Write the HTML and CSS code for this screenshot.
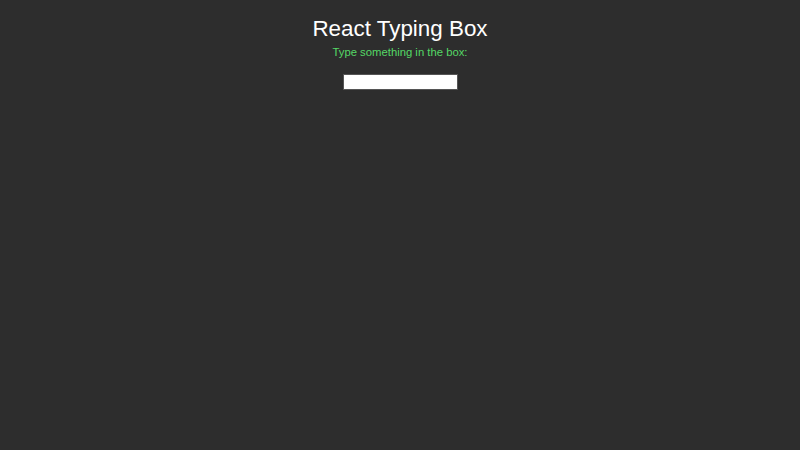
FILE: index.html
```html
<!DOCTYPE html>
<html lang="en">
<head>
  <meta charset="UTF-8">
  <meta name="viewport" content="width=device-width, initial-scale=1.0">
  <title>React Typing Box</title>
  <link rel="stylesheet" href="styles.css">
</head>
<body>

<div class="app">
  <h1 class="title">React Typing Box</h1>
  <p class="hint">Type something in the box:</p>
  <input type="text" class="typing-input" id="typing" />
  <p class="echo" id="echo"></p>
</div>

</body>
</html>
```

FILE: styles.css
```css
body {
  font-family: 'Liberation Sans', Arial, sans-serif;
  margin: 0;
  padding: 0;
  background-color: #2d2d2d;
  color: #fff;
}

.app {
  display: flex;
  flex-direction: column;
  align-items: center;
  padding-top: 16px;
}

.title {
  font-size: 22.4px;
  font-weight: normal;
  margin: 0;
  line-height: 26px;
}

.hint {
  font-size: 11.3px;
  color: #55d866;
  margin: 4px 0 0;
  line-height: 13px;
}

.typing-input {
  box-sizing: border-box;
  width: 115px;
  height: 16px;
  margin-top: 15px;
  padding: 0;
  border: 1px solid #555;
  background-color: #fff;
  font-size: 11px;
}

.echo {
  margin: 10px 0 0;
}
```
